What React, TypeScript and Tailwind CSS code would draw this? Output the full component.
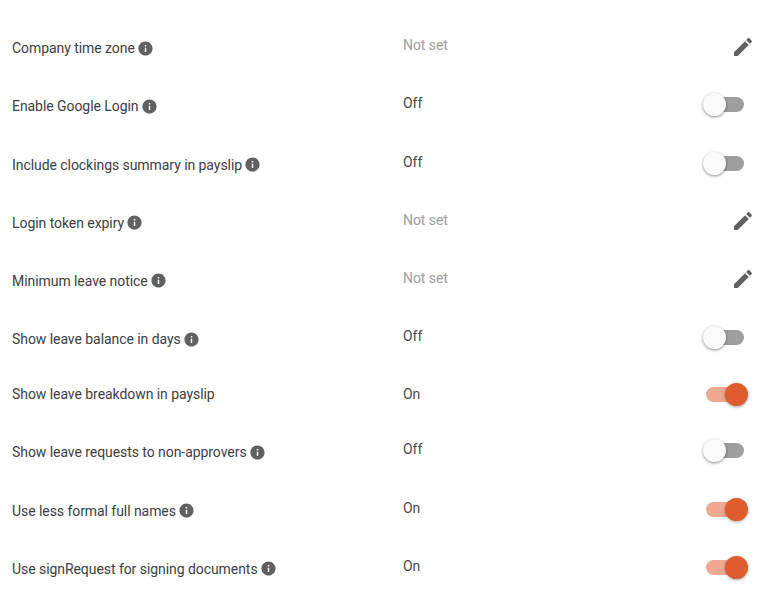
type Setting = { label: string; value: string; info: boolean; control: "edit" | "on" | "off" };

const settings: Setting[] = [
  { label: "Company time zone", value: "Not set", info: true, control: "edit" },
  { label: "Enable Google Login", value: "Off", info: true, control: "off" },
  { label: "Include clockings summary in payslip", value: "Off", info: true, control: "off" },
  { label: "Login token expiry", value: "Not set", info: true, control: "edit" },
  { label: "Minimum leave notice", value: "Not set", info: true, control: "edit" },
  { label: "Show leave balance in days", value: "Off", info: true, control: "off" },
  { label: "Show leave breakdown in payslip", value: "On", info: false, control: "on" },
  { label: "Show leave requests to non-approvers", value: "Off", info: true, control: "off" },
  { label: "Use less formal full names", value: "On", info: true, control: "on" },
  { label: "Use signRequest for signing documents", value: "On", info: true, control: "on" },
];

function InfoIcon() {
  return (
    <svg viewBox="0 0 24 24" className="ml-[2px] h-[17px] w-[17px] fill-[#616161]">
      <path d="M12 2C6.48 2 2 6.48 2 12s4.48 10 10 10 10-4.48 10-10S17.52 2 12 2zm1 15h-2v-6h2v6zm0-8h-2V7h2v2z" />
    </svg>
  );
}

function PencilIcon() {
  return (
    <svg viewBox="0 0 24 24" className="h-6 w-6 shrink-0 fill-[#616161]">
      <path d="M3 17.25V21h3.75L17.81 9.94l-3.75-3.75L3 17.25zM20.71 7.04c.39-.39.39-1.02 0-1.41l-2.34-2.34c-.39-.39-1.02-.39-1.41 0l-1.83 1.83 3.75 3.75 1.83-1.83z" />
    </svg>
  );
}

function Toggle({ on }: { on: boolean }) {
  if (on) {
    return (
      <div className="relative h-[15px] w-[38px] rounded-full bg-[#f0a890]">
        <div className="absolute right-[-4px] top-[-4px] h-[23px] w-[23px] rounded-full bg-[#de5c2e] shadow-[0_1px_3px_rgba(0,0,0,0.35)]" />
      </div>
    );
  }
  return (
    <div className="relative h-[15px] w-[38px] rounded-full bg-[#9e9e9e]">
      <div className="absolute left-[-3px] top-[-4px] h-[23px] w-[23px] rounded-full bg-[#fafafa] shadow-[0_1px_3px_rgba(0,0,0,0.45)]" />
    </div>
  );
}

function Row({ setting }: { setting: Setting }) {
  const muted = setting.control === "edit";
  return (
    <div className={setting.info ? "flex items-center py-[17.6px] pl-3" : "flex items-center pb-[17.43px] pl-3 pt-[17.6px]"}>
      <div className="flex w-[391px] shrink-0 self-start">
        <div className={setting.info ? "flex items-center pt-[3px] text-[#3c4043]" : "text-[#3c4043]"}>
          <span className="h-5">{setting.label}</span>
          {setting.info && <InfoIcon />}
        </div>
      </div>
      <div className={muted ? "flex-1 self-start text-[#9e9e9e]" : "flex-1 self-start text-[#4a4a4a]"}>{setting.value}</div>
      {setting.control === "edit" ? (
        <div className="mr-[9.5px] flex h-0 items-center">
          <PencilIcon />
        </div>
      ) : (
        <div className="mr-[20px] flex h-0 items-center">
          <Toggle on={setting.control === "on"} />
        </div>
      )}
    </div>
  );
}

export default function App() {
  return (
    <div className="h-[594px] w-[764px] overflow-hidden bg-white pt-[17.6px] font-['Roboto',sans-serif] text-sm leading-5 tracking-[-0.06px]">
      {settings.map((s) => (
        <Row key={s.label} setting={s} />
      ))}
    </div>
  );
}
